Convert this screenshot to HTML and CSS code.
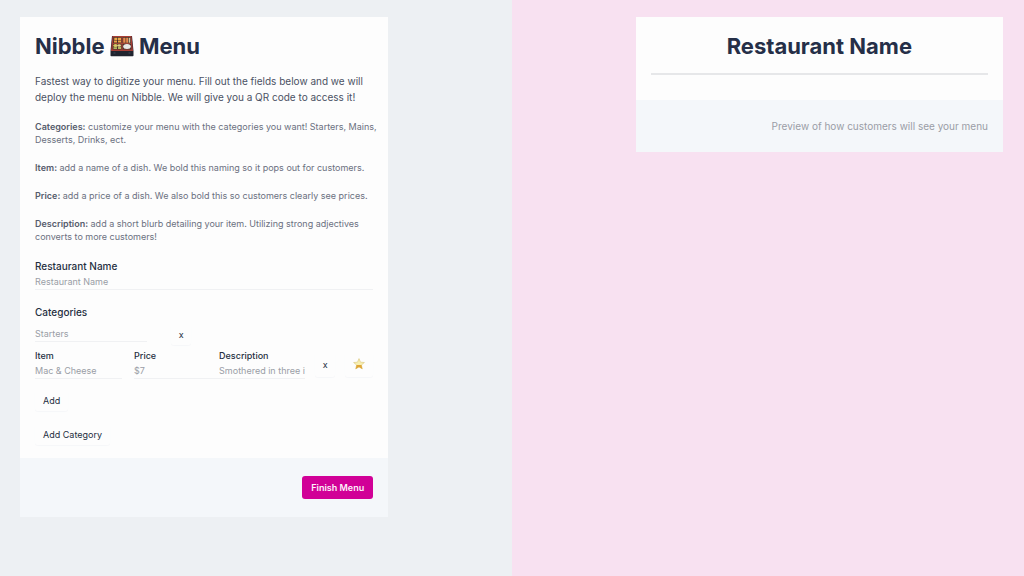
FILE: index.html
```html
<!DOCTYPE html>
<html lang="en">
<head>
  <meta charset="UTF-8" />
  <meta name="viewport" content="width=device-width, initial-scale=1" />
  <title>Nibble Menu</title>
  <link rel="stylesheet" href="styles.css">
</head>
<body>
  <main class="layout">
    <section class="pane pane-editor">
      <form class="card">
        <div class="card-body">
          <h1 class="title">
            Nibble
            <svg class="bento" viewBox="0 0 24 22" aria-hidden="true">
              <path d="M2 1h20l1.500 15v4.500q0 .8-.8.800H1.300q-.8 0-.8-.800V16z" fill="#20242f" />
              <path d="M2.500 1h19L23 16H1z" fill="#a83d35" />
              <path d="M3.500 2h17l1 12.500h-19z" fill="#4a332a" />
              <path d="M11.500 2h1v12.500h-1zM3 8h18.300v.8H3z" fill="#b5483b" />
              <path d="M4.300 2.800h3v2.200H4.300zM8 2.800h3v2.200H8zM4 5.600h3v2H4zM8 5.600h3v2H8z" fill="#eda547" />
              <path d="M13.200 2.800h2.300v4.900h-2.300zM16.200 2.800h1.800v4.900h-1.800z" fill="#e8894c" />
              <path d="M18.700 2.800h1.500v4.900h-1.500z" fill="#d8c49a" />
              <ellipse cx="5.500" cy="10.600" rx="2.200" ry="1.500" fill="#d9cb66" />
              <ellipse cx="9.300" cy="10.500" rx="1.700" ry="1.300" fill="#e6d58c" />
              <path d="M3.500 12.300h3.500v1.700H3.500zM8 12.100h3v1.800H8z" fill="#b5bb62" />
              <ellipse cx="17" cy="11.600" rx="3.800" ry="2.500" fill="#e9e8e5" />
              <path d="M3.500 18h2M18.500 18h2" stroke="#3d4658" stroke-width="1" />
            </svg>
            Menu
          </h1>
          <p class="lead">Fastest way to digitize your menu. Fill out the fields below and we will deploy the menu on Nibble. We will give you a QR code to access it!</p>
          <p class="hint"><strong>Categories:</strong> customize your menu with the categories you want! Starters, Mains, Desserts, Drinks, ect.</p>
          <p class="hint"><strong>Item:</strong> add a name of a dish. We bold this naming so it pops out for customers.</p>
          <p class="hint"><strong>Price:</strong> add a price of a dish. We also bold this so customers clearly see prices.</p>
          <p class="hint"><strong>Description:</strong> add a short blurb detailing your item. Utilizing strong adjectives converts to more customers!</p>

          <div class="field">
            <label class="label" for="restaurant">Restaurant Name</label>
            <input class="input" id="restaurant" type="text" placeholder="Restaurant Name" />
          </div>

          <label class="label" for="category">Categories</label>
          <div class="category-row">
            <input class="input" id="category" type="text" placeholder="Starters" />
            <button class="btn btn-icon" type="button" aria-label="Remove category">x</button>
          </div>

          <div class="item-row">
            <div class="item-name">
              <label class="label-small" for="item">Item</label>
              <input class="input" id="item" type="text" placeholder="Mac &amp; Cheese" />
            </div>
            <div>
              <label class="label-small" for="price">Price</label>
              <input class="input" id="price" type="text" placeholder="$7" />
            </div>
            <div>
              <label class="label-small" for="description">Description</label>
              <input class="input" id="description" type="text" placeholder="Smothered in three italian cheeses" />
            </div>
            <button class="btn btn-icon" type="button" aria-label="Remove item">x</button>
            <button class="btn btn-icon btn-star" type="button" aria-label="Feature item">
              <svg class="star" viewBox="0 0 12 12" aria-hidden="true">
                <path d="M6 .6l1.500 3.600 3.900.3-3 2.500.9 3.900L6 8.900l-3.300 2 .9-3.900-3-2.500 3.900-.3z" fill="#f8efb0" stroke="#d9c478" stroke-width=".6" stroke-linejoin="round" />
                <path d="M3.600 7h4.800l.9 3.900L6 8.900l-3.300 2z" fill="#dfa536" />
              </svg>
            </button>
          </div>

          <div class="actions">
            <button class="btn" type="button">Add</button>
            <button class="btn" type="button">Add Category</button>
          </div>
        </div>
        <div class="card-footer">
          <button class="btn-finish" type="submit">Finish Menu</button>
        </div>
      </form>
    </section>

    <section class="pane pane-preview">
      <div class="card">
        <div class="preview-body">
          <h2 class="title preview-title">Restaurant Name</h2>
        </div>
        <div class="card-footer">
          <p class="preview-note">Preview of how customers will see your menu</p>
        </div>
      </div>
    </section>
  </main>
</body>
</html>
```

FILE: styles.css
```css
* {
  box-sizing: border-box;
}

body {
  margin: 0;
  font-family: Inter, sans-serif;
  font-size: 9px;
  color: #252f3f;
}

h1, h2, p {
  margin: 0;
}

.layout {
  display: grid;
  grid-template-columns: 1fr 1fr;
  min-height: 100vh;
}

.pane {
  display: flex;
  align-items: flex-start;
  padding: 17px 20px;
}

.pane-editor {
  background: #edf0f3;
}

.pane-preview {
  justify-content: flex-end;
  padding-right: 21px;
  background: #f8e1f1;
}

.card {
  width: 78%;
  background: #fdfdfd;
}

.card-body {
  padding: 15px 15px 13px;
}

.title {
  font-size: 22px;
  line-height: 28px;
  font-weight: 700;
  color: #252f48;
}

.bento {
  width: 24px;
  height: 22px;
  vertical-align: -3px;
}

.lead {
  margin-top: 13px;
  font-size: 10px;
  line-height: 16px;
  color: #4b5163;
}

/* hints run a little wider than the fields below them */
.hint {
  margin-top: 15px;
  margin-right: -8px;
  line-height: 13px;
  color: #6b7080;
}

.hint strong {
  font-weight: 600;
  color: #565c6c;
}

.field {
  margin: 15px 0 14px;
}

.label,
.label-small {
  display: block;
  font-weight: 500;
}

.label {
  font-size: 10px;
  line-height: 16px;
}

.label-small {
  line-height: 14px;
}

.input {
  display: block;
  width: 100%;
  height: 16px;
  padding: 0;
  border: 0;
  border-bottom: 1px solid #f0f1f3;
  background: transparent;
  font: inherit;
  color: #252f3f;
}

.input::placeholder {
  color: #9a9da6;
  opacity: 1;
}

.category-row {
  display: grid;
  grid-template-columns: 5fr 9fr;
  align-items: center;
  gap: 24px;
  margin-top: 3px;
}

.item-row {
  display: grid;
  grid-template-columns: 99fr 85fr 86fr 30fr 38fr;
  align-items: center;
  margin-top: 4px;
}

.item-name {
  padding-right: 12px;
}

.btn {
  height: 22px;
  padding: 0 8px;
  border: 0;
  border-radius: 3px;
  background: #fdfdfd;
  box-shadow: 0 1px 1px #f6f7f9;
  font: inherit;
  color: #252f3f;
  cursor: pointer;
}

.btn-icon {
  width: 20px;
  padding: 0;
}

.item-row .btn-icon {
  justify-self: end;
  height: 26px;
}

.item-row .btn-star {
  width: 28px;
}

.star {
  display: block;
  width: 12px;
  height: 12px;
  margin: 0 auto;
}

.actions {
  display: flex;
  flex-direction: column;
  align-items: flex-start;
  gap: 12px;
  margin-top: 10px;
}

.card-footer {
  display: flex;
  justify-content: flex-end;
  padding: 18px 15px;
  background: #f4f7fa;
}

.btn-finish {
  height: 23px;
  padding: 0 9px;
  border: 0;
  border-radius: 3px;
  background: #d10097;
  font: inherit;
  font-weight: 600;
  color: #fdf2fa;
  cursor: pointer;
}

.preview-body {
  padding: 15px 15px 25px;
}

.preview-title {
  padding-bottom: 13px;
  border-bottom: 2px solid #e6e7e9;
  text-align: center;
}

.preview-note {
  font-size: 10px;
  line-height: 16px;
  color: #9a9da6;
}
```
